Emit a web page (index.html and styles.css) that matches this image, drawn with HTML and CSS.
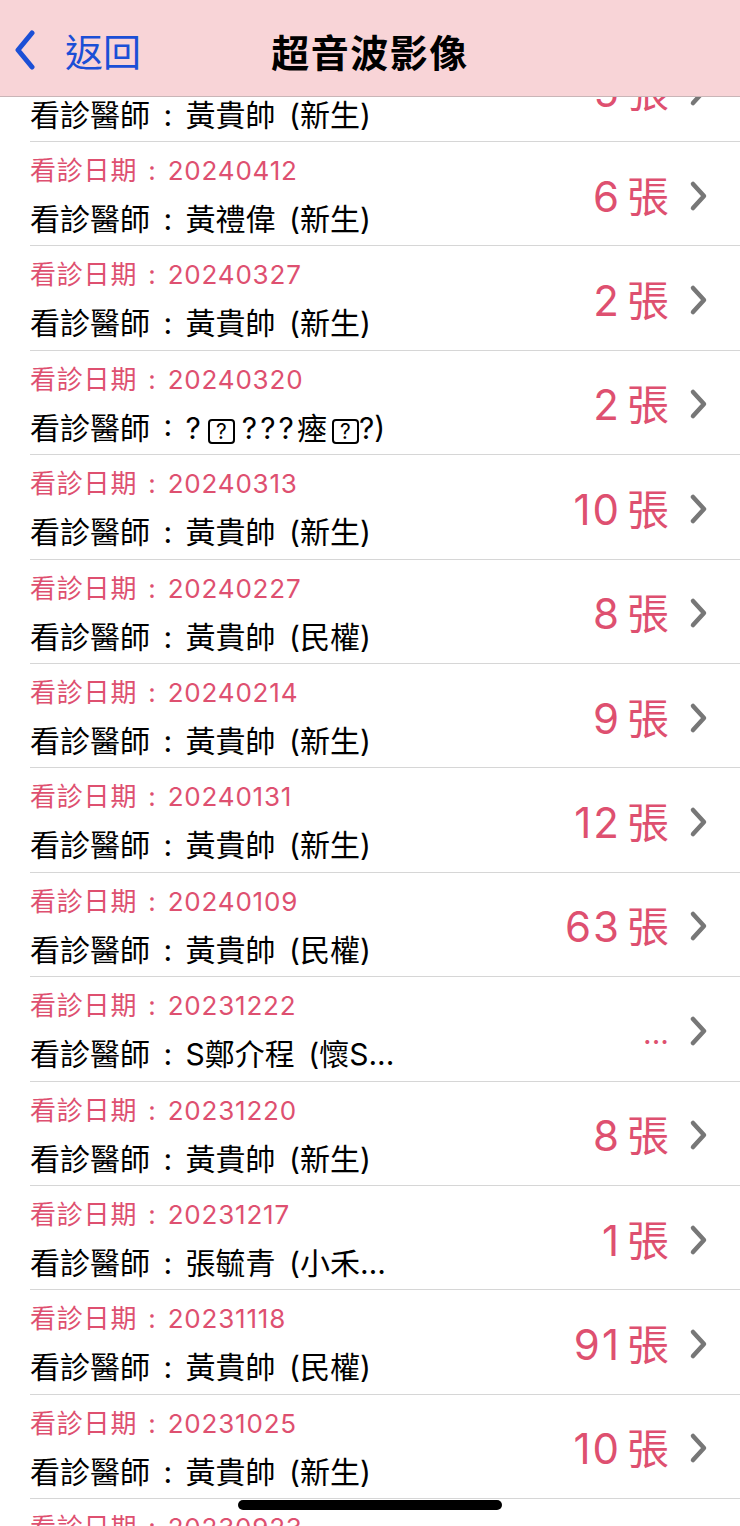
FILE: index.html
```html
<!DOCTYPE html>
<html lang="zh-Hant">
<head>
    <meta charset="UTF-8">
    <meta name="viewport" content="width=device-width, initial-scale=1.0">
    <title>超音波影像</title>
    <link rel="stylesheet" href="styles.css">
</head>
<body>
    <!-- 上方導覽列 -->
    <div class="navbar">
        <a class="back" href="#">
            <svg class="back-icon" width="20" height="40" viewBox="0 0 20 40">
                <polyline points="17,3 3,20 17,37" fill="none" stroke="#1b4fd6" stroke-width="5" stroke-linecap="round" stroke-linejoin="round"/>
            </svg>
            <span>返回</span>
        </a>
        <h1>超音波影像</h1>
        <div></div>
    </div>

    <!-- 影像清單 -->
    <div class="list">
        <div class="row">
            <div class="info">
                <div class="date">看診日期 : 20240417</div>
                <div class="doctor">看診醫師 : 黃貴帥 (新生)</div>
            </div>
            <div class="count">5<span class="unit">張</span></div>
            <svg class="chevron" width="20" height="32" viewBox="0 0 20 32"><polyline points="4,4 15,16 4,28" fill="none" stroke="#777" stroke-width="4.5" stroke-linecap="round" stroke-linejoin="round"/></svg>
        </div>
        <div class="row">
            <div class="info">
                <div class="date">看診日期 : 20240412</div>
                <div class="doctor">看診醫師 : 黃禮偉 (新生)</div>
            </div>
            <div class="count">6<span class="unit">張</span></div>
            <svg class="chevron" width="20" height="32" viewBox="0 0 20 32"><polyline points="4,4 15,16 4,28" fill="none" stroke="#777" stroke-width="4.5" stroke-linecap="round" stroke-linejoin="round"/></svg>
        </div>
        <div class="row">
            <div class="info">
                <div class="date">看診日期 : 20240327</div>
                <div class="doctor">看診醫師 : 黃貴帥 (新生)</div>
            </div>
            <div class="count">2<span class="unit">張</span></div>
            <svg class="chevron" width="20" height="32" viewBox="0 0 20 32"><polyline points="4,4 15,16 4,28" fill="none" stroke="#777" stroke-width="4.5" stroke-linecap="round" stroke-linejoin="round"/></svg>
        </div>
        <div class="row">
            <div class="info">
                <div class="date">看診日期 : 20240320</div>
                <div class="doctor">看診醫師 : ?<span class="box">?</span><span class="q">???</span>瘞<span class="box last">?</span>?)</div>
            </div>
            <div class="count">2<span class="unit">張</span></div>
            <svg class="chevron" width="20" height="32" viewBox="0 0 20 32"><polyline points="4,4 15,16 4,28" fill="none" stroke="#777" stroke-width="4.5" stroke-linecap="round" stroke-linejoin="round"/></svg>
        </div>
        <div class="row">
            <div class="info">
                <div class="date">看診日期 : 20240313</div>
                <div class="doctor">看診醫師 : 黃貴帥 (新生)</div>
            </div>
            <div class="count">10<span class="unit">張</span></div>
            <svg class="chevron" width="20" height="32" viewBox="0 0 20 32"><polyline points="4,4 15,16 4,28" fill="none" stroke="#777" stroke-width="4.5" stroke-linecap="round" stroke-linejoin="round"/></svg>
        </div>
        <div class="row">
            <div class="info">
                <div class="date">看診日期 : 20240227</div>
                <div class="doctor">看診醫師 : 黃貴帥 (民權)</div>
            </div>
            <div class="count">8<span class="unit">張</span></div>
            <svg class="chevron" width="20" height="32" viewBox="0 0 20 32"><polyline points="4,4 15,16 4,28" fill="none" stroke="#777" stroke-width="4.5" stroke-linecap="round" stroke-linejoin="round"/></svg>
        </div>
        <div class="row">
            <div class="info">
                <div class="date">看診日期 : 20240214</div>
                <div class="doctor">看診醫師 : 黃貴帥 (新生)</div>
            </div>
            <div class="count">9<span class="unit">張</span></div>
            <svg class="chevron" width="20" height="32" viewBox="0 0 20 32"><polyline points="4,4 15,16 4,28" fill="none" stroke="#777" stroke-width="4.5" stroke-linecap="round" stroke-linejoin="round"/></svg>
        </div>
        <div class="row">
            <div class="info">
                <div class="date">看診日期 : 20240131</div>
                <div class="doctor">看診醫師 : 黃貴帥 (新生)</div>
            </div>
            <div class="count">12<span class="unit">張</span></div>
            <svg class="chevron" width="20" height="32" viewBox="0 0 20 32"><polyline points="4,4 15,16 4,28" fill="none" stroke="#777" stroke-width="4.5" stroke-linecap="round" stroke-linejoin="round"/></svg>
        </div>
        <div class="row">
            <div class="info">
                <div class="date">看診日期 : 20240109</div>
                <div class="doctor">看診醫師 : 黃貴帥 (民權)</div>
            </div>
            <div class="count">63<span class="unit">張</span></div>
            <svg class="chevron" width="20" height="32" viewBox="0 0 20 32"><polyline points="4,4 15,16 4,28" fill="none" stroke="#777" stroke-width="4.5" stroke-linecap="round" stroke-linejoin="round"/></svg>
        </div>
        <div class="row">
            <div class="info">
                <div class="date">看診日期 : 20231222</div>
                <div class="doctor">看診醫師 : S鄭介程 (懷S...</div>
            </div>
            <div class="count dots">...</div>
            <svg class="chevron" width="20" height="32" viewBox="0 0 20 32"><polyline points="4,4 15,16 4,28" fill="none" stroke="#777" stroke-width="4.5" stroke-linecap="round" stroke-linejoin="round"/></svg>
        </div>
        <div class="row">
            <div class="info">
                <div class="date">看診日期 : 20231220</div>
                <div class="doctor">看診醫師 : 黃貴帥 (新生)</div>
            </div>
            <div class="count">8<span class="unit">張</span></div>
            <svg class="chevron" width="20" height="32" viewBox="0 0 20 32"><polyline points="4,4 15,16 4,28" fill="none" stroke="#777" stroke-width="4.5" stroke-linecap="round" stroke-linejoin="round"/></svg>
        </div>
        <div class="row">
            <div class="info">
                <div class="date">看診日期 : 20231217</div>
                <div class="doctor">看診醫師 : 張毓青 (小禾…</div>
            </div>
            <div class="count">1<span class="unit">張</span></div>
            <svg class="chevron" width="20" height="32" viewBox="0 0 20 32"><polyline points="4,4 15,16 4,28" fill="none" stroke="#777" stroke-width="4.5" stroke-linecap="round" stroke-linejoin="round"/></svg>
        </div>
        <div class="row">
            <div class="info">
                <div class="date">看診日期 : 20231118</div>
                <div class="doctor">看診醫師 : 黃貴帥 (民權)</div>
            </div>
            <div class="count">91<span class="unit">張</span></div>
            <svg class="chevron" width="20" height="32" viewBox="0 0 20 32"><polyline points="4,4 15,16 4,28" fill="none" stroke="#777" stroke-width="4.5" stroke-linecap="round" stroke-linejoin="round"/></svg>
        </div>
        <div class="row">
            <div class="info">
                <div class="date">看診日期 : 20231025</div>
                <div class="doctor">看診醫師 : 黃貴帥 (新生)</div>
            </div>
            <div class="count">10<span class="unit">張</span></div>
            <svg class="chevron" width="20" height="32" viewBox="0 0 20 32"><polyline points="4,4 15,16 4,28" fill="none" stroke="#777" stroke-width="4.5" stroke-linecap="round" stroke-linejoin="round"/></svg>
        </div>
        <div class="row">
            <div class="info">
                <div class="date">看診日期 : 20230923</div>
                <div class="doctor">看診醫師 : 黃貴帥 (新生)</div>
            </div>
            <div class="count">4<span class="unit">張</span></div>
            <svg class="chevron" width="20" height="32" viewBox="0 0 20 32"><polyline points="4,4 15,16 4,28" fill="none" stroke="#777" stroke-width="4.5" stroke-linecap="round" stroke-linejoin="round"/></svg>
        </div>
    </div>

    <!-- 首頁指示條 -->
    <div class="home-bar"></div>
</body>
</html>
```

FILE: styles.css
```css
body {
    font-family: Inter, "Noto Sans CJK TC", sans-serif;
    background-color: #ffffff;
    margin: 0;
    padding: 0;
    height: 1526px;
    overflow: hidden;
    color: #000;
}

.navbar {
    position: fixed;
    top: 0;
    left: 0;
    right: 0;
    height: 97px;
    background-color: #f8d4d7;
    border-bottom: 1px solid #c9b5b7;
    display: grid;
    grid-template-columns: 1fr auto 1fr;
    align-items: center;
    padding-top: 4px;
    box-sizing: border-box;
    z-index: 2;
}

.back {
    display: flex;
    align-items: center;
    gap: 30px;
    padding-left: 15px;
    color: #1b4fd6;
    text-decoration: none;
    font-size: 38px;
    font-family: "Noto Sans CJK TC", sans-serif;
}

.back span {
    line-height: 44px;
}

.navbar h1 {
    margin: 0;
    font-size: 38px;
    font-weight: bold;
    font-family: "Noto Sans CJK TC", sans-serif;
    letter-spacing: 1.5px;
}

.list {
    margin-top: 37.6px;
}

.row {
    height: 104.4px;
    box-sizing: border-box;
    margin-left: 30px;
    padding-right: 31px;
    border-bottom: 1.5px solid #d6d6d6;
    display: flex;
    align-items: center;
}

.info {
    flex: 1;
    min-width: 0;
    align-self: flex-start;
    padding-top: 9px;
}

.date {
    color: #de5070;
    font-size: 26px;
    line-height: 40px;
    letter-spacing: 0.8px;
    word-spacing: 3px;
    white-space: nowrap;
}

.doctor {
    font-size: 30px;
    line-height: 52px;
    margin-top: 2px;
    word-spacing: 5px;
    white-space: nowrap;
}

.box {
    display: inline-block;
    width: 27px;
    height: 25px;
    line-height: 21px;
    border: 2px solid #000;
    border-radius: 4px;
    font-size: 21px;
    text-align: center;
    box-sizing: border-box;
    vertical-align: 0;
    margin: 0 7px;
}

.box.last {
    margin: 0 0 0 5px;
}

.q {
    letter-spacing: 3px;
}

.count {
    color: #de5070;
    font-size: 42px;
    line-height: 48px;
    margin-top: 6px;
    letter-spacing: 2px;
    white-space: nowrap;
}

.count .unit {
    margin-left: 6px;
    letter-spacing: 0;
}

.count.dots {
    font-size: 30px;
    margin-top: 8px;
    letter-spacing: 0;
}

.chevron {
    margin-left: 20px;
    margin-top: 4px;
}

.home-bar {
    position: fixed;
    left: 238px;
    top: 1500px;
    width: 264px;
    height: 10px;
    border-radius: 5px;
    background-color: #000;
    z-index: 3;
}
```
